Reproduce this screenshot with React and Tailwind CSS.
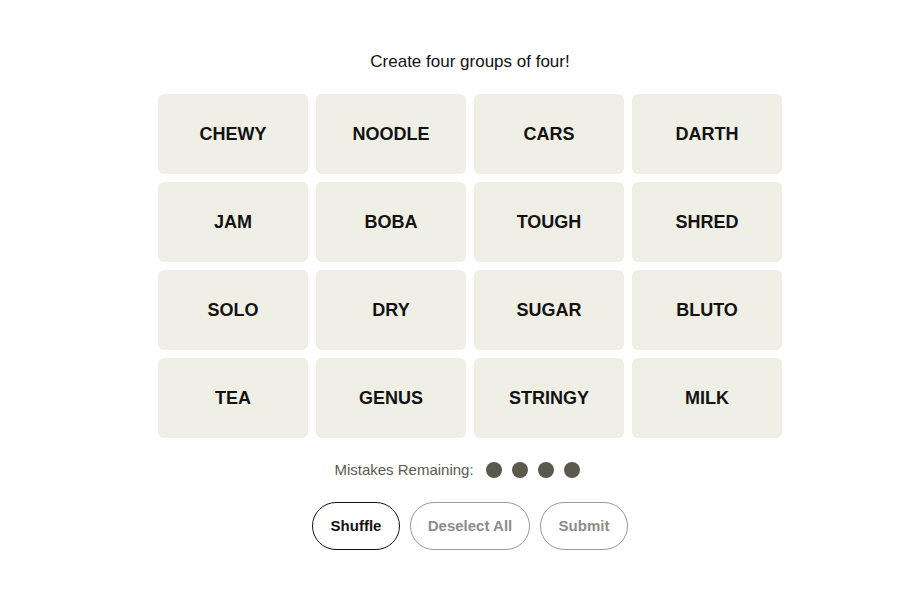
const words = [
  "CHEWY", "NOODLE", "CARS", "DARTH",
  "JAM", "BOBA", "TOUGH", "SHRED",
  "SOLO", "DRY", "SUGAR", "BLUTO",
  "TEA", "GENUS", "STRINGY", "MILK",
];

export default function App() {
  return (
    <div className="min-h-screen bg-white flex flex-col items-center pt-[50px] pl-[41px] font-['Liberation_Sans',Arial,sans-serif] text-[#121212]">
      <p className="text-[17px] leading-[22px] h-[22px] mb-[22px] mt-[1px]">Create four groups of four!</p>

      <div className="grid grid-cols-4 gap-2 w-[624px] -mt-[1px]">
        {words.map((w) => (
          <button
            key={w}
            className="h-20 rounded-md bg-[#efefe6] text-[18px] font-bold flex items-center justify-center"
          >
            {w}
          </button>
        ))}
      </div>

      <div className="flex items-center mt-[23px] h-[18px] mr-[26px]">
        <span className="text-[15px] text-[#5a594e] mr-[12px]">Mistakes Remaining:</span>
        <div className="flex gap-[10px]">
          <span className="w-4 h-4 rounded-full bg-[#5a594e]" />
          <span className="w-4 h-4 rounded-full bg-[#5a594e]" />
          <span className="w-4 h-4 rounded-full bg-[#5a594e]" />
          <span className="w-4 h-4 rounded-full bg-[#5a594e]" />
        </div>
      </div>

      <div className="flex gap-[10px] mt-[23px]">
        <button className="w-[88px] h-12 rounded-full border border-[#121212] text-[15px] font-bold">
          Shuffle
        </button>
        <button className="w-[120px] h-12 rounded-full border border-[#999] text-[15px] font-bold text-[#8c8c8c]">
          Deselect All
        </button>
        <button className="w-[88px] h-12 rounded-full border border-[#999] text-[15px] font-bold text-[#8c8c8c]">
          Submit
        </button>
      </div>
    </div>
  );
}
